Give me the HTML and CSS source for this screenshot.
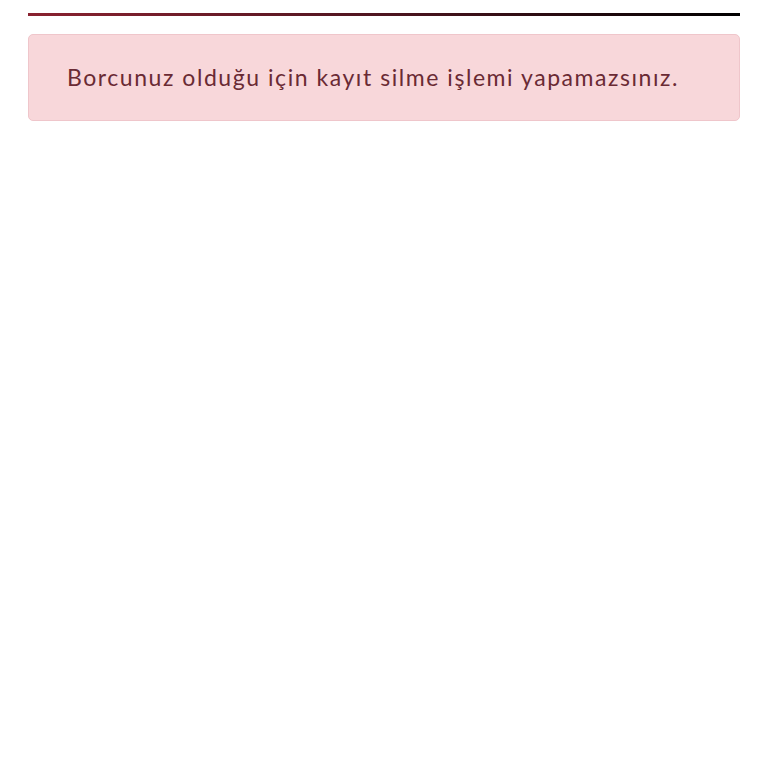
FILE: index.html
```html
<!DOCTYPE html>
<html lang="tr">
<head>
<meta charset="utf-8">
<link rel="stylesheet" href="styles.css">
</head>
<body>
<div class="page">
  <div class="rule"></div>
  <div class="alert">Borcunuz olduğu için kayıt silme işlemi yapamazsınız.</div>
</div>
</body>
</html>
```
FILE: styles.css
```css
html, body { margin: 0; padding: 0; background: #fff; }
.page { padding: 13px 28px 0 28px; }
.rule { height: 3px; background: linear-gradient(to right, #8a2230 0%, #4e1520 50%, #000 100%); }
.alert {
  margin-top: 18px;
  background: #f8d7da;
  border: 1px solid #efc6cb;
  border-radius: 5px;
  color: #6a2a34;
  font-family: "Lato", "Open Sans", sans-serif;
  font-weight: 400;
  font-size: 23px;
  letter-spacing: 1.55px;
  line-height: 30px;
  padding: 27px 38px 28px 38px;
}
```
